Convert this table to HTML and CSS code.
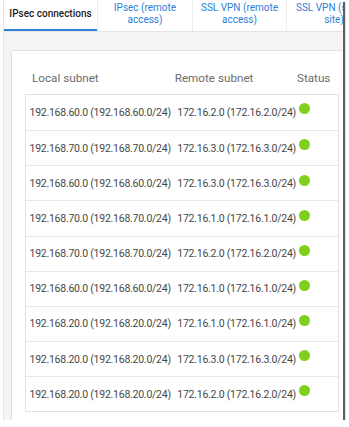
FILE: index.html
```html
<!DOCTYPE html>
<html lang="en">
<head>
<meta charset="utf-8">
<title>IPsec connections</title>
<link rel="stylesheet" href="styles.css">
</head>
<body>
<div class="shot">
  <div class="window">
    <nav class="tabs">
      <div class="tab tab-1 active">IPsec connections</div>
      <div class="tab tab-2">IPsec (remote<br>access)</div>
      <div class="tab tab-3">SSL VPN (remote<br>access)</div>
      <div class="tab tab-4">SSL VPN (site-to-<br>site)</div>
    </nav>
    <main class="page">
      <section class="panel">
        <div class="head">
          <span>Local subnet</span>
          <span>Remote subnet</span>
          <span>Status</span>
        </div>
        <div class="table">
          <div class="row"><span class="cell">192.168.60.0 (192.168.60.0/24)</span><span class="cell">172.16.2.0 (172.16.2.0/24)</span><span class="dot"></span></div>
          <div class="row"><span class="cell">192.168.70.0 (192.168.70.0/24)</span><span class="cell">172.16.3.0 (172.16.3.0/24)</span><span class="dot"></span></div>
          <div class="row"><span class="cell">192.168.60.0 (192.168.60.0/24)</span><span class="cell">172.16.3.0 (172.16.3.0/24)</span><span class="dot"></span></div>
          <div class="row"><span class="cell">192.168.70.0 (192.168.70.0/24)</span><span class="cell">172.16.1.0 (172.16.1.0/24)</span><span class="dot"></span></div>
          <div class="row"><span class="cell">192.168.70.0 (192.168.70.0/24)</span><span class="cell">172.16.2.0 (172.16.2.0/24)</span><span class="dot"></span></div>
          <div class="row"><span class="cell">192.168.60.0 (192.168.60.0/24)</span><span class="cell">172.16.1.0 (172.16.1.0/24)</span><span class="dot"></span></div>
          <div class="row"><span class="cell">192.168.20.0 (192.168.20.0/24)</span><span class="cell">172.16.1.0 (172.16.1.0/24)</span><span class="dot"></span></div>
          <div class="row"><span class="cell">192.168.20.0 (192.168.20.0/24)</span><span class="cell">172.16.3.0 (172.16.3.0/24)</span><span class="dot"></span></div>
          <div class="row"><span class="cell">192.168.20.0 (192.168.20.0/24)</span><span class="cell">172.16.2.0 (172.16.2.0/24)</span><span class="dot"></span></div>
        </div>
      </section>
    </main>
  </div>
</div>
</body>
</html>
```

FILE: styles.css
```css
* { box-sizing: border-box; }

html, body {
  margin: 0;
  padding: 0;
  background: #ffffff;
}

body {
  font-family: Roboto, "Liberation Sans", Arial, sans-serif;
  overflow: hidden;
}

.shot {
  width: 343px;
  height: 420px;
  overflow: hidden;
  background: #ffffff;
  box-shadow: 2px 2px 1px rgba(40, 40, 40, 0.75);
}

.window {
  margin-left: 3px;
  height: 100%;
  border-left: 1px solid #e4e4e4;
  display: flex;
  flex-direction: column;
  width: 420px;
}

.tabs {
  display: flex;
  height: 32px;
  flex: 0 0 auto;
  border-bottom: 1px solid #e4e4e4;
  background: #ffffff;
}

.tab {
  height: 31px;
  display: flex;
  align-items: center;
  justify-content: center;
  text-align: center;
  padding-bottom: 3px;
  font-size: 10px;
  line-height: 11.7px;
  color: #2d7fd5;
  border-left: 1px solid #eeeeee;
  white-space: nowrap;
  flex: 0 0 auto;
}

.tab-1 { width: 93px; border-left: none; }
.tab-2 { width: 95px; }
.tab-3 { width: 94px; }
.tab-4 { width: 95px; }

.tab.active {
  color: #1e1e1e;
  font-weight: 500;
  border-bottom: 2px solid #2f80d6;
  padding-bottom: 1px;
}

.page {
  flex: 1 1 auto;
  background: #f4f4f4;
  padding: 18px 0 0 7px;
}

.panel {
  width: 380px;
  height: 400px;
  background: #ffffff;
  border: 1px solid #e2e2e2;
  border-radius: 2px;
  padding: 20px 0 0 13px;
}

.head {
  display: grid;
  grid-template-columns: 142.7px 122.3px auto;
  padding-left: 7px;
  padding-bottom: 9px;
  font-size: 11.7px;
  line-height: 14px;
  color: #6c6c6c;
  white-space: nowrap;
}

.table {
  width: 314px;
  border: 1px solid #e2e2e2;
  background: #ffffff;
}

.row {
  display: grid;
  grid-template-columns: 147.8px 122px auto;
  align-items: center;
  height: 35.15px;
  padding-left: 3.5px;
  border-top: 1px solid #e8e8e8;
  font-size: 10.5px;
  letter-spacing: -0.25px;
  color: #474747;
  white-space: nowrap;
}

.row:first-child { border-top: none; }

.dot {
  align-self: start;
  margin-top: 8.3px;
  width: 11px;
  height: 11px;
  border-radius: 50%;
  background: #7fd01c;
}
```
